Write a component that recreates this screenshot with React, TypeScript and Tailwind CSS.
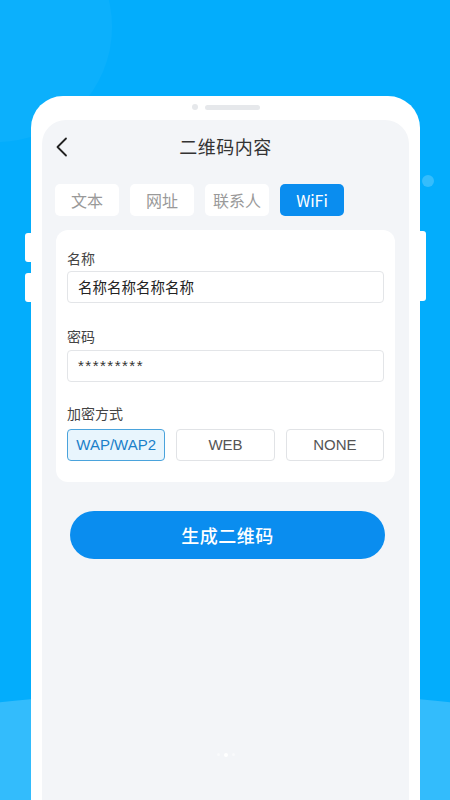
import { useState } from 'react';

const tabs = ['文本', '网址', '联系人', 'WiFi'];
const modes = ['WAP/WAP2', 'WEB', 'NONE'];

export default function App() {
    const [tab, setTab] = useState('WiFi');
    const [mode, setMode] = useState('WAP/WAP2');

    return (
        <div
            className="relative w-[450px] h-[800px] overflow-hidden bg-[#03adfc]"
            style={{ fontFamily: '"Noto Sans CJK SC", "Liberation Sans", sans-serif' }}
        >
            {/* background decoration */}
            <div className="absolute left-[-118px] top-[-88px] w-[230px] h-[230px] rounded-full bg-white/[0.035]" />
            <div className="absolute left-[-500px] top-[690px] w-[1450px] h-[500px] rounded-[50%] bg-[#33bcfc]" />
            <div className="absolute left-[422px] top-[175px] w-[12px] h-[12px] rounded-full bg-white/20" />

            {/* phone */}
            <div className="relative ml-[31px] mt-[96px] w-[389px] h-[720px] bg-white rounded-t-[32px] px-[11px]">
                <div className="absolute left-[-6px] top-[137px] w-[7px] h-[29px] rounded-l-[3px] bg-white" />
                <div className="absolute left-[-6px] top-[177px] w-[7px] h-[29px] rounded-l-[3px] bg-white" />
                <div className="absolute right-[-6px] top-[135px] w-[7px] h-[70px] rounded-r-[3px] bg-white" />

                <div className="flex items-center justify-center gap-[7px] h-[24px] pb-[2px]">
                    <div className="w-[6px] h-[6px] rounded-full bg-[#e6e8eb]" />
                    <div className="w-[55px] h-[5px] rounded-full bg-[#e6e8eb]" />
                </div>

                {/* screen */}
                <div className="relative h-[700px] bg-[#f3f5f8] rounded-t-[24px] px-[14px]">
                    <div className="relative flex items-center justify-center h-[52px]">
                        <svg className="absolute left-[-1px] top-[17px]" width="14" height="20" viewBox="0 0 14 20">
                            <polyline points="11,1.5 2.5,10 11,18.5" fill="none" stroke="#222" strokeWidth="1.8" strokeLinecap="round" strokeLinejoin="round" />
                        </svg>
                        <span className="text-[18px] text-[#333] tracking-[0.5px]">二维码内容</span>
                    </div>

                    <div className="flex gap-[11px] mt-[12px] ml-[-1px]">
                        {tabs.map((t) => (
                            <button
                                key={t}
                                onClick={() => setTab(t)}
                                className={`w-[64px] h-[32px] rounded-[5px] text-[16px] ${tab === t ? 'bg-[#0a8def] text-white' : 'bg-white text-[#999]'}`}
                            >
                                {t}
                            </button>
                        ))}
                    </div>

                    <div className="mt-[14px] bg-white rounded-[12px] pt-[18px] pb-[21px] px-[11px]">
                        <div className="text-[14px] leading-[20px] text-[#444]">名称</div>
                        <div className="mt-[3px] h-[32px] border border-[#e3e5e8] rounded-[4px] flex items-center px-[10px] text-[14.5px] text-[#222]">
                            名称名称名称名称
                        </div>

                        <div className="mt-[23px] text-[14px] leading-[20px] text-[#444]">密码</div>
                        <div className="mt-[4px] h-[32px] border border-[#e3e5e8] rounded-[4px] flex items-center px-[10px] text-[15px] text-[#333] tracking-[1.5px]" style={{ fontFamily: '"Liberation Sans", sans-serif' }}>
                            *********
                        </div>

                        <div className="mt-[21px] text-[14px] leading-[20px] text-[#444]">加密方式</div>
                        <div className="mt-[6px] flex gap-[11px]">
                            {modes.map((m) => (
                                <button
                                    key={m}
                                    onClick={() => setMode(m)}
                                    className={`flex-1 h-[32px] rounded-[4px] border text-[15px] ${mode === m ? 'bg-[#e8f5fd] border-[#4aa3dc] text-[#1a7fc9]' : 'bg-white border-[#e1e3e6] text-[#555]'}`}
                                    style={{ fontFamily: '"Liberation Sans", sans-serif' }}
                                >
                                    {m}
                                </button>
                            ))}
                        </div>
                    </div>

                    <button className="mt-[29px] ml-[14px] w-[315px] h-[48px] rounded-full bg-[#0a8def] text-white text-[18px] font-medium tracking-[0.5px]">
                        生成二维码
                    </button>

                    <div className="absolute left-0 right-0 top-[633px] flex justify-center gap-[4px]">
                        <div className="w-[3px] h-[3px] rounded-full bg-white/50" />
                        <div className="w-[4px] h-[4px] rounded-full bg-white" />
                        <div className="w-[3px] h-[3px] rounded-full bg-white/50" />
                    </div>
                </div>
            </div>
        </div>
    );
}
